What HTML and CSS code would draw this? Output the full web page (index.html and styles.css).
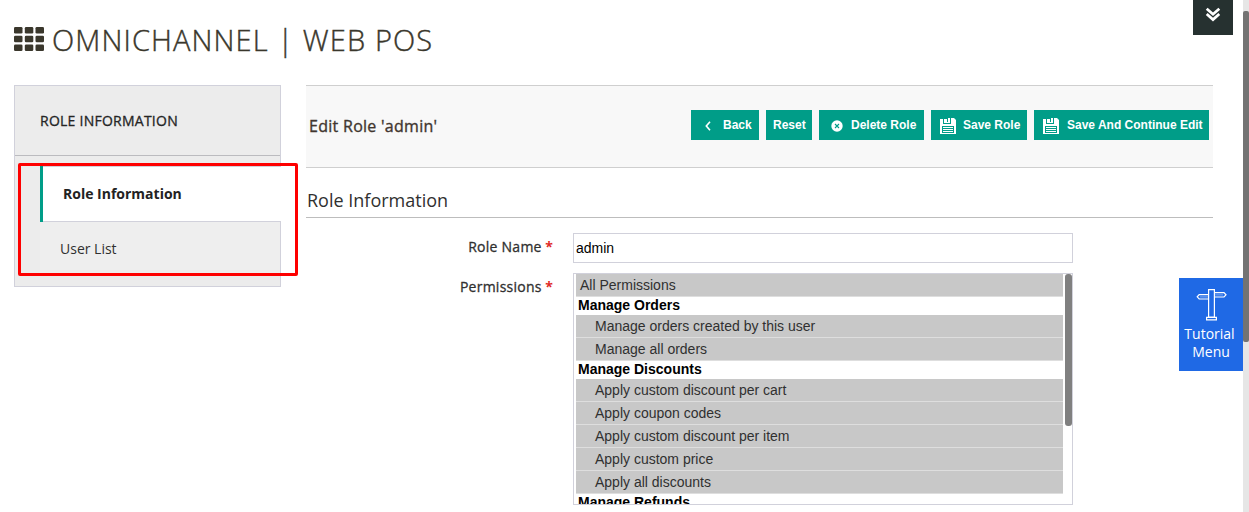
FILE: index.html
```html
<!DOCTYPE html>
<html lang="en">
<head>
<meta charset="utf-8">
<title>Omnichannel | Web POS</title>
<link rel="stylesheet" href="styles.css">
</head>
<body>
<svg class="defs" aria-hidden="true">
  <symbol id="save" viewBox="0 0 16 16">
    <path fill="#fff" fill-rule="evenodd" d="M0 1H3V6H11V0H14L16 2V16H0ZM2 8V15H14V8Z"/>
    <path fill="#fff" d="M5 1H7V4H8V0H10V5H4V1ZM3 9H13V10H3ZM3 11H13V12H3ZM3 13H13V14H3Z"/>
  </symbol>
</svg>
<header class="header">
  <svg class="grid-icon" viewBox="0 0 30 24">
    <g fill="#3a372c">
      <rect x="0" y="0" width="8.5" height="6.5" rx="1.3"/><rect x="10.8" y="0" width="8.5" height="6.5" rx="1.3"/><rect x="21.5" y="0" width="8.5" height="6.5" rx="1.3"/>
      <rect x="0" y="8.8" width="8.5" height="6.4" rx="1.3"/><rect x="10.8" y="8.8" width="8.5" height="6.4" rx="1.3"/><rect x="21.5" y="8.8" width="8.5" height="6.4" rx="1.3"/>
      <rect x="0" y="17.5" width="8.5" height="6.5" rx="1.3"/><rect x="10.8" y="17.5" width="8.5" height="6.5" rx="1.3"/><rect x="21.5" y="17.5" width="8.5" height="6.5" rx="1.3"/>
    </g>
  </svg>
  <h1 class="title">OMNICHANNEL | WEB POS</h1>
</header>
<div class="layout">
  <aside class="sidebar">
    <h2 class="side-title"><span>ROLE INFORMATION</span></h2>
    <nav class="tabs">
      <a class="tab active"><span>Role Information</span></a>
      <a class="tab"><span>User List</span></a>
    </nav>
    <div class="highlight"></div>
  </aside>
  <main class="main">
    <div class="toolbar">
      <h3 class="toolbar-title"><span>Edit Role 'admin'</span></h3>
      <div class="buttons">
        <button class="btn back"><svg class="chev" viewBox="0 0 6 10"><path d="M5 .8L1.3 5L5 9.2" fill="none" stroke="#fff" stroke-width="1.6"/></svg><span>Back</span></button>
        <button class="btn reset"><span>Reset</span></button>
        <button class="btn delete"><svg class="cross" viewBox="0 0 12 12"><circle cx="6" cy="6" r="5.7" fill="#fff"/><path d="M4 4L8 8M8 4L4 8" stroke="#009d88" stroke-width="1.1"/></svg><span>Delete Role</span></button>
        <button class="btn save"><svg class="disk"><use href="#save"/></svg><span>Save Role</span></button>
        <button class="btn save-edit"><svg class="disk"><use href="#save"/></svg><span>Save And Continue Edit</span></button>
      </div>
    </div>
    <h3 class="section"><span>Role Information</span></h3>
    <div class="row">
      <label class="label"><span class="name">Role Name</span> <b class="req">*</b></label>
      <div class="input">admin</div>
    </div>
    <div class="row">
      <label class="label"><span class="name">Permissions</span> <b class="req">*</b></label>
      <div class="select">
        <div class="options">
          <div class="opt top">All Permissions</div>
          <div class="group">Manage Orders</div>
          <div class="opt">Manage orders created by this user</div>
          <div class="opt">Manage all orders</div>
          <div class="group">Manage Discounts</div>
          <div class="opt">Apply custom discount per cart</div>
          <div class="opt">Apply coupon codes</div>
          <div class="opt">Apply custom discount per item</div>
          <div class="opt">Apply custom price</div>
          <div class="opt">Apply all discounts</div>
          <div class="group">Manage Refunds</div>
        </div>
        <div class="select-thumb"></div>
      </div>
    </div>
  </main>
</div>
<div class="collapse"><svg class="down" viewBox="0 0 16 15"><path d="M1.7 1.7L8 7.3L14.3 1.7M1.7 7L8 12.6L14.3 7" fill="none" stroke="#fff" stroke-width="2.7"/></svg></div>
<div class="tutorial">
  <svg class="sign" viewBox="0 0 32 34" fill="none" stroke="#fff" stroke-width="1.2">
    <path d="M13.6 1.6H19.4V29H13.6ZM11.6 29.4H21.4V31.8H11.6Z"/>
    <path d="M13.6 6.6H4.2L2.2 8.8L4.2 11H13.6M19.4 4.6H29L31 6.8L29 9H19.4"/>
    <path d="M5 8.8H13M20 6.8H28" stroke-opacity=".35"/>
  </svg>
  <span class="tut">Tutorial</span><span>Menu</span>
</div>
<div class="scrollbar"><div class="thumb"></div></div>
</body>
</html>
```
FILE: styles.css
```css
* { box-sizing: border-box; }
body { margin: 0; height: 512px; overflow: hidden; position: relative; background: #fff; font-family: "Open Sans", sans-serif; color: #303030; }
h1, h2, h3 { margin: 0; font-weight: 400; }
.defs { position: absolute; width: 0; height: 0; }
.header { display: flex; align-items: flex-start; height: 85px; padding-left: 14px; }
.grid-icon { width: 30px; height: 24px; margin-top: 27px; }
.title { margin: 20px 0 0 8px; font-size: 29px; line-height: 40px; font-weight: 300; letter-spacing: 1.12px; -webkit-text-stroke: .4px #3a372c; color: #3a372c; white-space: nowrap; }
.layout { display: flex; gap: 25px; padding-left: 14px; align-items: flex-start; }
.sidebar { position: relative; width: 267px; height: 202px; background: #ececec; border: 1px solid #d1d1db; }
.side-title { height: 70px; padding-left: 25px; border-bottom: 1px solid #bbbbbf; font-size: 14px; line-height: 70px; letter-spacing: .25px; -webkit-text-stroke: .3px #252525; color: #252525; }
.tabs { margin: 10px -1px 0 25px; }
.tab { display: block; height: 55px; border-top: 1px solid #d1d1db; border-right: 1px solid #d1d1db; padding-left: 20px; font-size: 14px; line-height: 54px; background: #eee; }
.tab.active { position: relative; height: 55px; padding-left: 23px; border-right: 0; background: #fff; font-weight: 700; color: #222; }
.tab.active::before { content: ""; position: absolute; left: 0; top: -1px; width: 3px; height: 56px; background: #009d88; }
.highlight { position: absolute; left: 3px; top: 77px; width: 280px; height: 113px; border: 3px solid #fe0000; border-radius: 2px; }
.main { width: 907px; }
.toolbar { display: flex; justify-content: space-between; align-items: flex-start; height: 83px; padding: 24px 4px 0 3px; background: #f8f8f8; border-top: 1px solid #cfcfcf; border-bottom: 1px solid #cfcfcf; }
.toolbar-title { font-size: 16px; line-height: 32px; letter-spacing: .28px; -webkit-text-stroke: .35px #41362f; color: #41362f; }
.buttons { display: flex; gap: 7px; }
.btn { display: flex; height: 30px; padding: 0; border: 0; background: #009d88; color: #fff; font: bold 12px/30px "Liberation Sans", sans-serif; white-space: nowrap; }
.back { width: 68px; }
.reset { width: 46px; padding-left: 7px; }
.delete { width: 105px; }
.save { width: 96px; }
.save-edit { width: 175px; }
.chev { width: 6px; height: 10px; margin: 11px 12px 0 14px; }
.cross { width: 12px; height: 12px; margin: 10px 8px 0 12px; }
.disk { width: 16px; height: 16px; margin: 8px 7px 0 9px; }
.save-edit .disk { margin-right: 8px; }
.section { height: 50px; padding-left: 1px; margin-bottom: 15px; border-bottom: 1px solid #bdbdbd; font-size: 18px; line-height: 65px; color: #303030; }
.row { display: flex; margin-bottom: 10px; }
.label { width: 247px; margin-right: 20px; text-align: right; font-size: 14px; line-height: 28px; }
.name { letter-spacing: .25px; -webkit-text-stroke: .3px #303030; }
.req { color: #e02b27; }
.input { width: 500px; height: 30px; padding-left: 2px; border: 1px solid #d1d1db; font: 14px/28px "Liberation Sans", sans-serif; color: #000; }
.select { display: flex; width: 500px; height: 232px; padding-left: 2px; border: 1px solid #d1d1db; overflow: hidden; font: 14px "Liberation Sans", sans-serif; }
.options { width: 487px; margin-right: 2px; }
.opt { height: 23px; padding-left: 19px; background: #c8c8c8; border-bottom: 1px solid #dedede; line-height: 22px; color: #303030; }
.opt.top { padding-left: 4px; }
.group { height: 18px; padding-left: 2px; font-weight: 700; line-height: 17px; color: #000; }
.select-thumb { width: 7px; height: 152px; border-radius: 3px; background: #808080; }
.collapse { position: absolute; left: 1193px; top: 0; width: 40px; height: 35px; background: #263130; }
.down { display: block; width: 16px; height: 15px; margin: 7px 0 0 12px; }
.tutorial { position: absolute; left: 1179px; top: 278px; width: 64px; height: 93px; display: flex; flex-direction: column; align-items: center; background: #1f69e5; color: #fff; font-size: 14px; line-height: 18px; }
.tut { margin-left: -3px; }
.sign { width: 32px; height: 34px; margin: 10px 0 3px; }
.scrollbar { position: absolute; right: 0; top: 0; width: 6px; height: 512px; padding-top: 11px; background: #e6e6e6; }
.thumb { height: 331px; border-radius: 2px; background: #737373; }
```
